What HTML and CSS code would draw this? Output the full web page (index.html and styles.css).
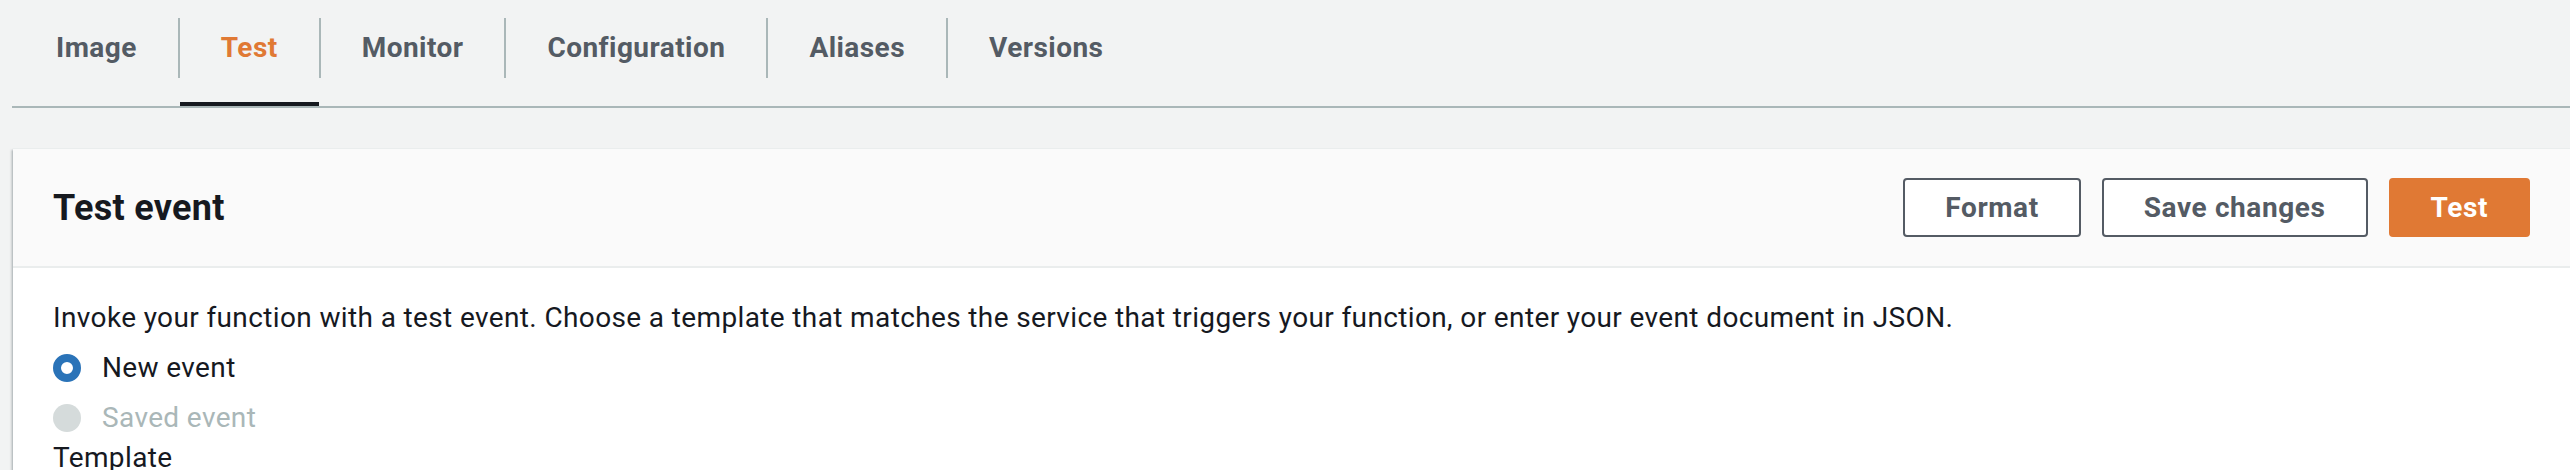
FILE: index.html
```html
<!DOCTYPE html>
<html lang="en">
<head>
<meta charset="utf-8">
<title>Test event</title>
<link rel="stylesheet" href="styles.css">
</head>
<body>
  <nav class="tabs">
    <div class="tab">Image</div>
    <span class="tab-sep"></span>
    <div class="tab tab-active">Test</div>
    <span class="tab-sep"></span>
    <div class="tab">Monitor</div>
    <span class="tab-sep"></span>
    <div class="tab">Configuration</div>
    <span class="tab-sep"></span>
    <div class="tab">Aliases</div>
    <span class="tab-sep"></span>
    <div class="tab">Versions</div>
  </nav>

  <section class="panel">
    <header class="panel-header">
      <h2 class="panel-title">Test event</h2>
      <div class="actions">
        <button class="btn">Format</button>
        <button class="btn">Save changes</button>
        <button class="btn btn-primary">Test</button>
      </div>
    </header>
    <div class="panel-body">
      <p class="desc">Invoke your function with a test event. Choose a template that matches the service that triggers your function, or enter your event document in JSON.</p>
      <div class="radio-row">
        <span class="radio radio-checked"></span>
        <span class="radio-label">New event</span>
      </div>
      <div class="radio-row radio-disabled">
        <span class="radio"></span>
        <span class="radio-label">Saved event</span>
      </div>
      <div class="field-label">Template</div>
    </div>
  </section>
</body>
</html>
```

FILE: styles.css
```css
* {
  box-sizing: border-box;
}

html, body {
  margin: 0;
  padding: 0;
}

body {
  background: #f2f3f3;
  font-family: Roboto, "Liberation Sans", Arial, sans-serif;
  font-size: 28px;
  letter-spacing: 0.37px;
  color: #16191f;
  overflow: hidden;
  height: 470px;
}

.tabs {
  display: flex;
  align-items: flex-start;
  margin-left: 12px;
  padding-left: 3px;
  border-bottom: 2px solid #aab7b8;
  height: 108px;
}

.tab {
  padding: 18px 41px 24px;
  height: 106px;
  line-height: 60px;
  font-weight: 700;
  letter-spacing: 0.45px;
  color: #545b64;
  border-bottom: 4px solid transparent;
  white-space: nowrap;
}

.tab-active {
  color: #e07934;
  border-bottom-color: #16191f;
}

.tab-sep {
  flex: none;
  width: 2px;
  height: 60px;
  margin-top: 18px;
  background: #aab7b8;
}

.panel {
  margin: 40px 0 0 13px;
  background: #ffffff;
  border-top: 1px solid #eaeded;
  box-shadow: 0 2px 2px 0 rgba(0, 28, 36, 0.3), -2px 2px 2px 0 rgba(0, 28, 36, 0.15);
}

.panel-header {
  display: flex;
  align-items: center;
  justify-content: space-between;
  height: 119px;
  padding: 0 40px 0 40px;
  background: #fafafa;
  border-bottom: 2px solid #eaeded;
}

.panel-title {
  margin: 0;
  font-size: 36px;
  font-weight: 700;
  line-height: 48px;
  letter-spacing: 0.3px;
  color: #16191f;
}

.actions {
  display: flex;
  gap: 21px;
}

.btn {
  font-family: inherit;
  font-size: 28px;
  font-weight: 700;
  letter-spacing: 0.6px;
  height: 59px;
  padding: 0 40px;
  line-height: 40px;
  color: #545b64;
  background: #ffffff;
  border: 2px solid #545b64;
  border-radius: 4px;
}

.btn-primary {
  color: #ffffff;
  background: #e07934;
  border-color: #e07934;
}

.panel-body {
  padding: 30px 40px 0 40px;
  background: #ffffff;
}

.desc {
  margin: 0;
  line-height: 40px;
}

.radio-row {
  display: flex;
  align-items: center;
  height: 40px;
  margin-top: 10px;
}

.radio {
  flex: none;
  width: 28px;
  height: 28px;
  border-radius: 50%;
  background: #d5dbdb;
  margin-right: 21px;
}

.radio-checked {
  background: #ffffff;
  border: 8px solid #2a73b8;
}

.radio-label {
  line-height: 40px;
}

.radio-disabled .radio-label {
  color: #aab7b8;
}

.field-label {
  line-height: 40px;
}
```
